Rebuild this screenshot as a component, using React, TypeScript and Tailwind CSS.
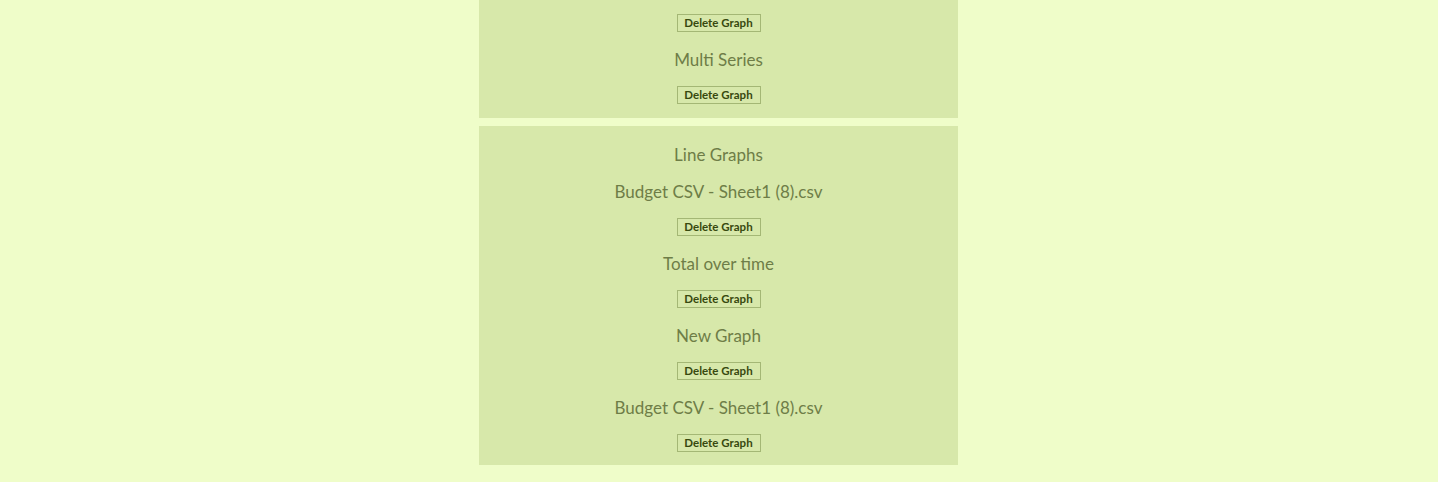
type Item = { kind: 'h' | 'b'; text?: string };

const first: Item[] = [{ kind: 'b' }, { kind: 'h', text: 'Multi Series' }, { kind: 'b' }];

const second: Item[] = [
  { kind: 'h', text: 'Line Graphs' },
  { kind: 'h', text: 'Budget CSV - Sheet1 (8).csv' },
  { kind: 'b' },
  { kind: 'h', text: 'Total over time' },
  { kind: 'b' },
  { kind: 'h', text: 'New Graph' },
  { kind: 'b' },
  { kind: 'h', text: 'Budget CSV - Sheet1 (8).csv' },
  { kind: 'b' },
];

function gapFor(prev: Item | undefined, cur: Item) {
  if (!prev) return 'mt-0';
  if (cur.kind === 'b') return 'mt-[14px]';
  if (prev.kind === 'b') return 'mt-[16px]';
  return 'mt-[13px]';
}

function Panel({ items, className }: { items: Item[]; className: string }) {
  return (
    <div className={`flex flex-col items-center bg-[#d7e8aa] ${className}`}>
      {items.map((it, i) =>
        it.kind === 'h' ? (
          <div
            key={i}
            className={`h-6 leading-6 text-[17px] text-[#6e7d47] ${gapFor(items[i - 1], it)}`}
          >
            {it.text}
          </div>
        ) : (
          <button
            key={i}
            className={`h-[18px] w-[84px] border border-[#a4b775] bg-transparent text-[11.5px] font-bold leading-4 text-[#38490f] ${gapFor(items[i - 1], it)}`}
          >
            Delete Graph
          </button>
        )
      )}
    </div>
  );
}

export default function App() {
  return (
    <div
      className="min-h-[482px] w-full bg-[#effdc9] flex justify-center pr-px"
      style={{ fontFamily: 'Lato, "Noto Sans", sans-serif' }}
    >
      <div className="w-[479px] flex flex-col gap-2">
        <Panel items={first} className="pt-[14px] pb-[14px]" />
        <Panel items={second} className="pt-[17px] pb-[13px]" />
      </div>
    </div>
  );
}
